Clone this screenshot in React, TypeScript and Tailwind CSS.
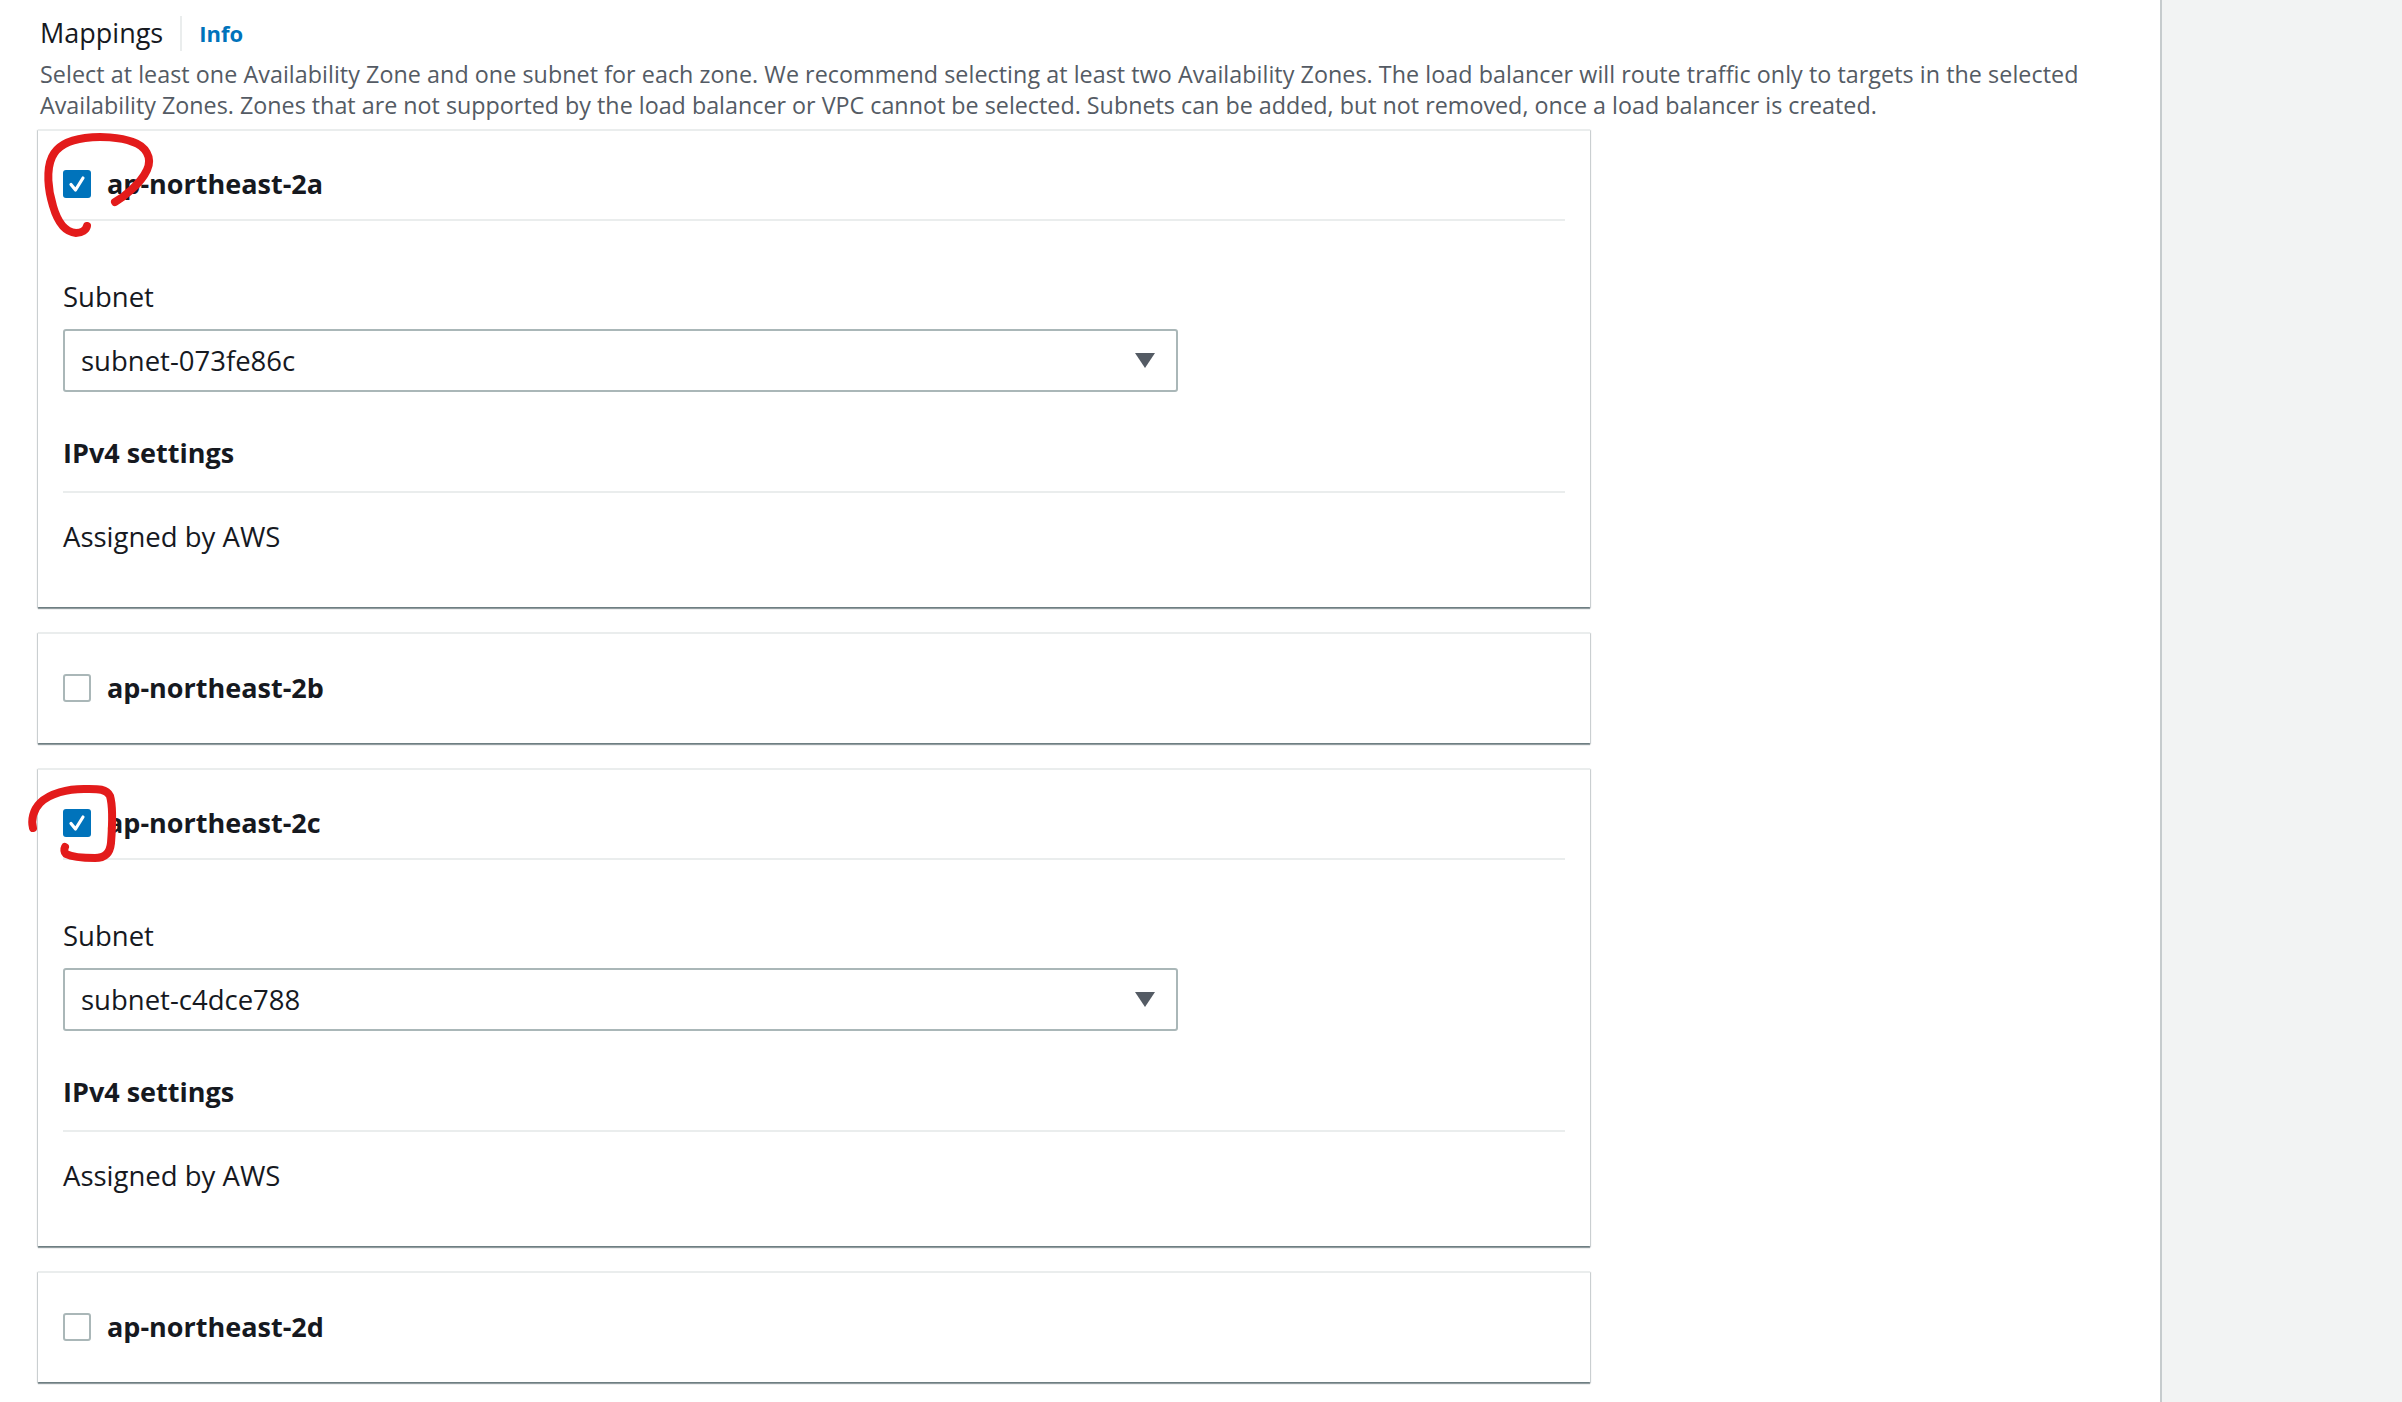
type Zone = {
  name: string;
  checked: boolean;
  subnet?: string;
};

const zones: Zone[] = [
  { name: 'ap-northeast-2a', checked: true, subnet: 'subnet-073fe86c' },
  { name: 'ap-northeast-2b', checked: false },
  { name: 'ap-northeast-2c', checked: true, subnet: 'subnet-c4dce788' },
  { name: 'ap-northeast-2d', checked: false },
];

function Checkbox({ checked }: { checked: boolean }) {
  if (checked) {
    return (
      <span className="flex size-[28px] shrink-0 items-center justify-center rounded-[3px] bg-[#0073bb]">
        <svg viewBox="0 0 28 28" className="size-[28px]" fill="none">
          <path d="M8 14.5 L12.5 20 L20 8" stroke="white" strokeWidth="3.2" strokeLinecap="round" strokeLinejoin="round" />
        </svg>
      </span>
    );
  }
  return <span className="block size-[28px] shrink-0 rounded-[3px] border-2 border-[#aab7b8] bg-white" />;
}

function ZoneCard({ zone }: { zone: Zone }) {
  return (
    <div className="w-[1552px] border-t-2 border-[#eaeded] bg-white px-[25px] pt-[18px] shadow-[0_2px_1px_0_rgba(0,28,36,0.4),1px_1px_1px_0_rgba(0,28,36,0.15),-1px_1px_1px_0_rgba(0,28,36,0.15)]">
      <div className={`flex h-[72px] items-center gap-[16px] ${zone.checked ? 'border-b-2 border-[#eaeded]' : ''}`}>
        <Checkbox checked={zone.checked} />
        <span className="text-[27px] font-bold leading-[36px] text-[#16191f]">{zone.name}</span>
      </div>
      {zone.checked ? (
        <div className="pb-[52px]">
          <div className="mt-[58px] text-[27.5px] leading-[36px] text-[#16191f]">Subnet</div>
          <div className="mt-[14px] flex h-[63px] w-[1115px] items-center justify-between rounded-[3px] border-2 border-[#aab7b8] pl-[16px] pr-[21px]">
            <span className="text-[27.5px] leading-[36px] text-[#16191f]">{zone.subnet}</span>
            <svg viewBox="0 0 20 15" className="h-[15px] w-[20px]">
              <path d="M0 0 H20 L10 15 Z" fill="#545b64" />
            </svg>
          </div>
          <div className="mt-[43px] border-b-2 border-[#eaeded] pb-[20px] text-[27px] font-bold leading-[36px] text-[#16191f]">
            IPv4 settings
          </div>
          <div className="mt-[26px] text-[27.5px] leading-[36px] text-[#16191f]">Assigned by AWS</div>
        </div>
      ) : (
        <div className="h-[19px]" />
      )}
    </div>
  );
}

export default function App() {
  return (
    <div className="relative flex h-[1402px] w-full overflow-hidden bg-white font-['Open_Sans',sans-serif]">
      <main className="flex-1 pl-[38px] pt-[15px]">
        <div className="flex items-center pl-[2px]">
          <h2 className="text-[27px] font-normal leading-[36px] text-[#16191f]">Mappings</h2>
          <span className="mx-[17px] h-[35px] w-[2px] bg-[#eaeded]" />
          <a className="text-[22px] font-bold leading-[36px] text-[#0073bb]">Info</a>
        </div>
        <p className="mt-[8px] pl-[2px] text-[23.3px] leading-[31px] text-[#545b64]">
          <span className="block whitespace-nowrap tracking-[0.05px]">
            Select at least one Availability Zone and one subnet for each zone. We recommend selecting at least two Availability Zones. The load balancer will route traffic only to targets in the selected
          </span>
          <span className="block whitespace-nowrap">
            Availability Zones. Zones that are not supported by the load balancer or VPC cannot be selected. Subnets can be added, but not removed, once a load balancer is created.
          </span>
        </p>
        <div className="mt-[8px] flex flex-col gap-[25px]">
          {zones.map((zone) => (
            <ZoneCard key={zone.name} zone={zone} />
          ))}
        </div>
      </main>
      <aside className="w-[242px] shrink-0 border-l-2 border-[#c6cbcd] bg-[#f2f3f3]" />

      {/* hand-drawn red annotations */}
      <svg className="pointer-events-none absolute left-0 top-0 h-[1402px] w-[2402px]" viewBox="0 0 2402 1402" fill="none">
        <path
          d="M115 202 C122 198 140 185 147 170 C153 157 145 146 133 142 C120 137 100 136 85 138 C70 140 57 146 52 157 C46 170 48 190 53 206 C57 220 64 232 76 233 C82 233 86 230 87 226"
          stroke="#e31b1b"
          strokeWidth="8"
          strokeLinecap="round"
          strokeLinejoin="round"
        />
        <path
          d="M33 828 C31 820 33 810 40 803 C50 793 68 789 84 789 C96 789 106 788 110 796 C113 806 112 830 111 843 C110 853 105 858 95 858 C84 858 72 857 66 854 C64 852 64 849 65 847"
          stroke="#e31b1b"
          strokeWidth="8"
          strokeLinecap="round"
          strokeLinejoin="round"
        />
      </svg>
    </div>
  );
}
